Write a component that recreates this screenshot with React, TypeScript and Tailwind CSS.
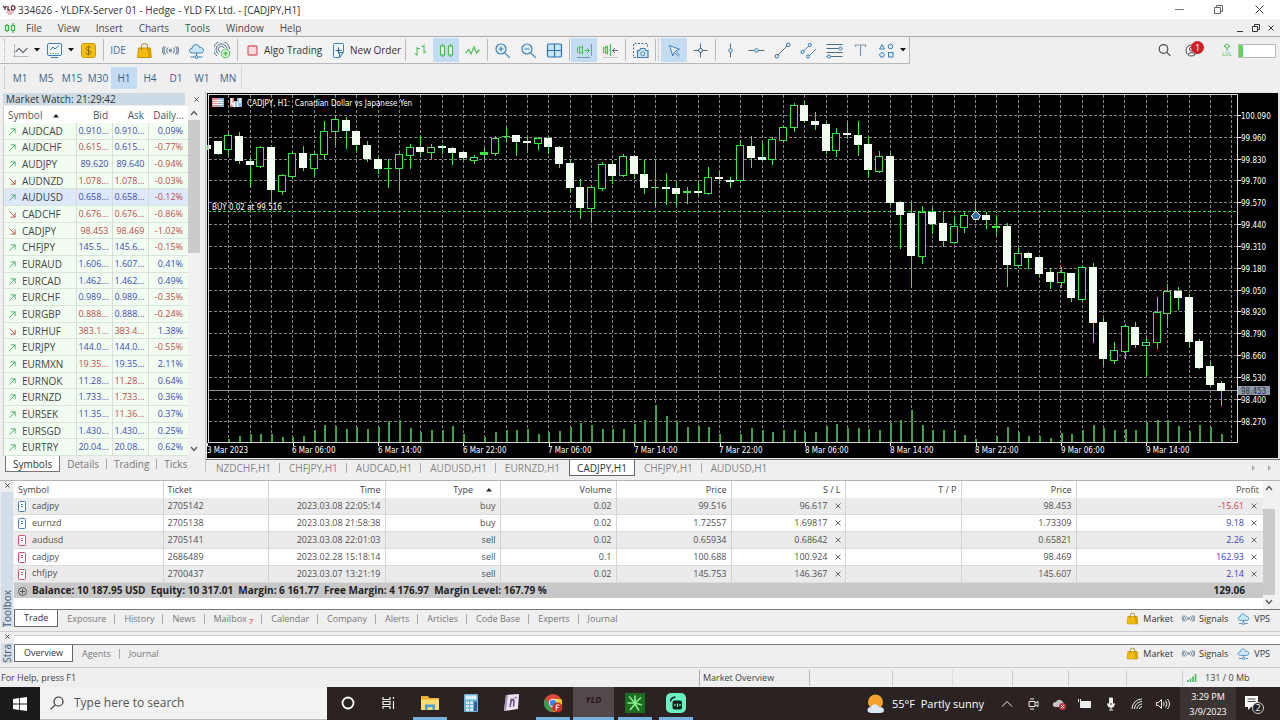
import React from "react";

type IconName =
  | "line" | "template" | "dollar" | "bag" | "signal" | "cloud" | "copy" | "stop" | "order" | "bars" | "candles"
  | "zigzag" | "zoomIn" | "zoomOut" | "tiles" | "scroll" | "shift" | "camera" | "cursor" | "cross" | "vline"
  | "hline" | "trend" | "channel" | "fibo" | "text" | "shapes" | "search";

const B = "#3f7fb5";
const G = "#4cbb55";
const D = "#4d6a87";

const drawings: Record<IconName, React.ReactNode> = {
  line: (
    <g stroke="#8b9097">
      <path d="M2.5 2v13.5M1 14.5h15" stroke="#b4b8bc" />
      <path d="M3.5 10l3.5-3.5 4 4 4.5-4.5" stroke="#6d747c" strokeWidth="1.3" />
    </g>
  ),
  template: (
    <g stroke={B}>
      <rect x="1.5" y="1.5" width="14" height="12" rx="1.5" fill="#f3f9fe" />
      <path d="M4 8l3-3 2 2 4-3.5" />
      <path d="M4 11.5h9" strokeDasharray="1.5 1" stroke={G} />
      <path d="M5 15.5h7" />
    </g>
  ),
  dollar: (
    <g>
      <rect x="1.5" y="1.5" width="14" height="14" rx="2.5" fill="#f4c20d" stroke="#d09a00" />
      <path d="M11 6.2C10.600 5.200 9.700 4.800 8.500 4.800c-1.500 0-2.500.7-2.500 1.800 0 2.600 5 1.200 5 3.800 0 1.200-1.100 1.900-2.500 1.900-1.400 0-2.400-.6-2.700-1.700M8.500 3.500v10" stroke="#8d6600" />
    </g>
  ),
  bag: (
    <g>
      <path d="M2.500 6h12l.8 9.500H1.700z" fill="#f1bd0c" stroke="#c99300" />
      <path d="M5.500 8V4.500a3 3 0 0 1 6 0V8" stroke="#a87b00" />
      <path d="M11.500 6.500h3l.4 8.500h-2.600z" fill="#d99f00" stroke="none" />
    </g>
  ),
  signal: (
    <g stroke={D}>
      <circle cx="8.500" cy="8.500" r="1.200" fill="#8fc0e6" />
      <path d="M6 5.500a4 4 0 0 0 0 6M11 5.500a4 4 0 0 1 0 6M3.500 4.500a6.500 6.500 0 0 0 0 8M13.500 4.500a6.500 6.500 0 0 1 0 8M1.500 4.500a8 8 0 0 0 0 8M15.500 4.500a8 8 0 0 1 0 8" />
    </g>
  ),
  cloud: (
    <g stroke={B}>
      <path d="M4.500 11C.5 11 .5 6.500 4 6.500 4 2 10.500 1 11.500 5.500c5-.5 5 5.500 1.500 5.500z" fill="#c8e6fa" />
      <path d="M8.500 11v3M2.500 15h4.200M10.300 15h4.200" />
      <circle cx="8.500" cy="15" r="1.500" fill="#c8e6fa" />
    </g>
  ),
  copy: (
    <g stroke={D}>
      <path d="M3 14a8 8 0 1 1 12.500-7M4.500 12a5.500 5.500 0 1 1 8.500-5.500M6 10a3 3 0 1 1 4-4" />
      <circle cx="11.500" cy="11.500" r="4.300" fill="#dff7de" stroke={G} />
      <path d="M9.300 11.500h4.400M11.500 9.300v4.400" stroke={G} strokeWidth="1.300" />
    </g>
  ),
  stop: <rect x="4" y="4" width="9" height="9" rx="1" fill="#fbdcdc" stroke="#d2686b" strokeWidth="1.300" />,
  order: (
    <g stroke={B}>
      <path d="M13.500 9V2.500a1 1 0 0 0-1-1h-8a1 1 0 0 0-1 1v12a1 1 0 0 0 1 1h5z" fill="#f2f9fe" />
      <path d="M13.500 10.500l-4 5v-5z" fill="#cfe6f8" />
      <path d="M5.500 8.500h6M8.500 5.500v6" stroke="#2e6496" strokeWidth="1.200" />
    </g>
  ),
  bars: <path d="M5 5v9M5 12H2.500M5 6.500h3M12 2.500v9M12 4.500H9.500M12 10h2.500" stroke={G} />,
  candles: (
    <g stroke={G} strokeWidth="1.200">
      <rect x="2.500" y="4" width="4" height="9" fill="#e6f7e6" />
      <rect x="10.500" y="4" width="4" height="9" fill="#e6f7e6" />
      <path d="M4.500 2v2M4.500 13v2M12.500 2v2M12.500 13v2" />
    </g>
  ),
  zigzag: <path d="M1.500 11l3.500-3.500 2 4.500 3-7 2.500 6 3-3.500" stroke={G} strokeWidth="1.200" />,
  zoomIn: (
    <g stroke={B} strokeWidth="1.200">
      <circle cx="7" cy="7" r="5" fill="#dff0fc" />
      <path d="M10.800 10.800l5 5M4.500 7h5M7 4.500v5" />
    </g>
  ),
  zoomOut: (
    <g stroke={B} strokeWidth="1.200">
      <circle cx="7" cy="7" r="5" fill="#dff0fc" />
      <path d="M10.800 10.800l5 5M4.500 7h5" />
    </g>
  ),
  tiles: (
    <g stroke="#2f70a8" strokeWidth="1.200">
      <rect x="1.500" y="2" width="14" height="13" rx="1.500" fill="#c9e5fa" />
      <path d="M8.500 2v13M1.500 8.500h14" />
    </g>
  ),
  scroll: (
    <g stroke={G}>
      <path d="M1.500 5v6M3.500 4v8M6.500 3.500v9M4.500 5.500h2v5h-2M8.500 8.500h4.500M11 6l2.500 2.500L11 11" />
      <path d="M15.500 2v12M1 15.500h13" stroke="#7795ad" />
    </g>
  ),
  shift: (
    <g stroke={G}>
      <path d="M1.500 5v6M3.500 4v8M5.500 3.500v9M3.500 5.500h2v5h-2M8.500 2v12" strokeWidth="1.200" />
      <path d="M16 8.500h-5M13 6l-2.500 2.500L13 11" stroke={D} />
      <path d="M1 15.500h15" stroke="#c3c7ca" />
    </g>
  ),
  camera: (
    <g stroke={B}>
      <path d="M4 15.500H1.500V1.500h14V5" stroke={D} strokeDasharray="2 1.500" />
      <path d="M5.500 8.500h2l1.200-2h4l1.200 2H16v7H5.500z" fill="#c9e5fa" strokeWidth="1.200" />
      <circle cx="10.700" cy="11.700" r="1.900" fill="#fff" />
    </g>
  ),
  cursor: <path d="M3.500 3.500l10 3.800-4 1.700 4 4-1.200 1.200-4-4-1.500 3.800z" fill="#e4f2fd" stroke={B} />,
  cross: (
    <g stroke={D}>
      <path d="M8.500 1.500v14M1.500 8.500h14" />
      <circle cx="8.500" cy="8.500" r="2" fill="#d8ecfb" />
    </g>
  ),
  vline: (
    <g stroke={D}>
      <path d="M8.500 1.500v14" />
      <circle cx="8.500" cy="8.500" r="1.800" fill="#d8ecfb" stroke={B} />
    </g>
  ),
  hline: (
    <g stroke={D}>
      <path d="M.5 8.500h16" />
      <circle cx="8.500" cy="8.500" r="1.800" fill="#d8ecfb" stroke={B} />
    </g>
  ),
  trend: (
    <g stroke={D}>
      <path d="M3 14L14 3" />
      <circle cx="2.800" cy="14.200" r="1.800" fill="#d8ecfb" />
      <circle cx="14.200" cy="2.800" r="1.800" fill="#d8ecfb" />
    </g>
  ),
  channel: (
    <g stroke={B}>
      <path d="M2.500 10L10 3M7.500 15.500L16 7" />
      <circle cx="2.500" cy="10" r="1.600" fill="#d8ecfb" />
      <circle cx="9.800" cy="3" r="1.600" fill="#d8ecfb" />
      <circle cx="8" cy="14.500" r="1.600" fill="#d8ecfb" />
    </g>
  ),
  fibo: (
    <g stroke={D}>
      <path d="M.5 2.500h16M.5 6.500h16M.5 10.500h16M.5 14.500h16" />
      <circle cx="14.500" cy="6.500" r="1.600" fill="#d8ecfb" stroke={B} />
      <circle cx="3" cy="14.500" r="1.600" fill="#d8ecfb" stroke={B} />
    </g>
  ),
  text: <path d="M3.500 5V3h10v2M8.500 3v11" stroke="#8495a6" strokeWidth="1.200" />,
  shapes: (
    <g stroke={B}>
      <path d="M4 2.500l2.500 4.500h-5z" fill="#d8ecfb" />
      <circle cx="12.500" cy="4.500" r="2.300" fill="#d8ecfb" />
      <path d="M4 10.300l2.500 1.900-1 2.800H2.500l-1-2.800z" fill="#d8ecfb" />
      <rect x="10.500" y="10.500" width="4.500" height="4.500" fill="#d8ecfb" />
    </g>
  ),
  search: (
    <g stroke="#4a4a4a" strokeWidth="1.200">
      <circle cx="7.500" cy="7" r="4.300" />
      <path d="M10.800 10.300l3.500 3.500" />
    </g>
  ),
};

function Icon({ name, className = "size-[17px]" }: { name: IconName; className?: string }) {
  return (
    <svg viewBox="0 0 17 17" fill="none" className={className} aria-hidden="true">
      {drawings[name]}
    </svg>
  );
}

function Cross({ className = "size-[6px]" }: { className?: string }) {
  return (
    <svg viewBox="0 0 6 6" className={className} fill="none" stroke="currentColor" aria-hidden="true">
      <path d="M.5.5l5 5M5.500.5l-5 5" />
    </svg>
  );
}

function Tool({ name, label, active }: { name: IconName; label: string; active?: boolean }) {
  return (
    <button
      type="button"
      aria-label={label}
      aria-pressed={active}
      className={`flex h-6 w-[26px] shrink-0 items-center justify-center ${active ? "bg-[#c3dcf1]" : ""}`}
    >
      <Icon name={name} />
    </button>
  );
}

const Sep = () => <span className="mx-px h-[22px] w-0.5 shrink-0 border-r border-[#b9bcbf]" />;

const Grip = () => <span className="mx-px h-[22px] w-0.5 shrink-0 border-l border-dotted border-[#b0b0b0]" />;

function Drop({ label }: { label: string }) {
  return (
    <button type="button" aria-label={label} className="flex h-6 w-2 shrink-0 items-center justify-center">
      <svg viewBox="0 0 6 4" className="h-1 w-1.5" aria-hidden="true">
        <path d="M0 0h6L3 3.500z" fill="#111" />
      </svg>
    </button>
  );
}

function Header() {
  const menu = ["File", "View", "Insert", "Charts", "Tools", "Window", "Help"];
  return (
    <header>
      <div className="flex h-[19px] items-center bg-white pl-0.5 text-[#333]">
        <svg viewBox="0 0 14 10" className="mr-0.5 h-2.5 w-3.5" aria-hidden="true">
          <path d="M1 1l2 2 1.500-2M3 3v2M6 1v4h2M9.500 1v4q4 0 3.500-2.500T9.500 1" fill="none" stroke="#63343c" strokeWidth="1.300" />
          <path d="M4 7.500l3-.8 2 .8 3-.8M6 9h4" fill="none" stroke="#d5747b" />
        </svg>
        <h1 className="whitespace-nowrap">334626 - YLDFX-Server 01 - Hedge - YLD FX Ltd. - [CADJPY,H1]</h1>
        <div className="ml-auto flex">
          <button type="button" aria-label="Minimize" className="flex w-[39px] justify-center">
            <svg viewBox="0 0 9 9" className="size-[9px]" stroke="#777"><path d="M0 4.500h9" /></svg>
          </button>
          <button type="button" aria-label="Restore" className="flex w-[39px] justify-center">
            <svg viewBox="0 0 9 9" className="size-[9px]" fill="none" stroke="#666"><path d="M.5 2.500h6v6h-6zM2.500 2.500v-2h6v6h-2" /></svg>
          </button>
          <button type="button" aria-label="Close" className="flex w-[42px] justify-center">
            <svg viewBox="0 0 9 9" className="size-[9px]" stroke="#444"><path d="M.5.5l8 8M8.500.5l-8 8" /></svg>
          </button>
        </div>
      </div>
      <nav className="flex h-[18px] items-center border-b border-[#a9abad] text-[#4a4a4a]">
        <svg viewBox="0 0 12 12" className="mx-1 size-3" fill="none" stroke="#3db54a" strokeWidth="1.200" aria-hidden="true">
          <path d="M1.500 3.500h3v5h-3zM7.500 3.500h3v5h-3zM3 2v1.500M3 8.500V10M9 1v2.500M9 8.500V11" />
        </svg>
        {menu.map((m) => (
          <button type="button" key={m} className="pr-[10px] pl-[6px]">
            {m}
          </button>
        ))}
        <div className="ml-auto flex items-center gap-[8px] pr-[6px] text-[#333]">
          <button type="button" aria-label="Minimize chart">
            <svg viewBox="0 0 8 8" className="size-2" stroke="#333"><path d="M1 7.500h6" /></svg>
          </button>
          <button type="button" aria-label="Restore chart">
            <svg viewBox="0 0 8 8" className="size-2" fill="none" stroke="#333"><path d="M.5 2.500h5v5h-5zM2.500 2.500v-2h5v5h-2" /></svg>
          </button>
          <button type="button" aria-label="Close chart"><Cross /></button>
        </div>
      </nav>
      <div className="flex h-[27px] items-center">
        <div className="flex h-[27px] items-center border-r border-b border-[#b5b7b9] bg-[#f2f2f2] pr-0.5 pl-[3px] text-[#333]">
          <Grip />
          <Tool name="line" label="Chart type" />
          <Drop label="Chart types" />
          <Tool name="template" label="Template" />
          <Drop label="Templates" />
          <Tool name="dollar" label="Symbols" />
          <Sep />
          <button type="button" className="w-[26px] text-[#3b6f9e]">IDE</button>
          <Tool name="bag" label="Market" />
          <Tool name="signal" label="Signals" />
          <Tool name="cloud" label="VPS" />
          <Tool name="copy" label="Copy trading" />
          <Sep />
          <button type="button" className="flex w-[85px] items-center gap-[3px] pl-[5px] whitespace-nowrap"><Icon name="stop" />Algo Trading</button>
          <button type="button" className="flex w-[79px] items-center gap-[3px] pl-[6px] whitespace-nowrap"><Icon name="order" />New Order</button>
          <Sep />
          <Tool name="bars" label="Bar chart" />
          <Tool name="candles" label="Candlesticks" active />
          <Tool name="zigzag" label="Line chart" />
          <Sep />
          <Tool name="zoomIn" label="Zoom in" />
          <Tool name="zoomOut" label="Zoom out" />
          <Tool name="tiles" label="Tile windows" />
          <Sep />
          <Tool name="scroll" label="Auto scroll" active />
          <Tool name="shift" label="Chart shift" />
          <Sep />
          <Tool name="camera" label="Screenshot" />
          <Sep />
          <Grip />
          <Tool name="cursor" label="Cursor" active />
          <Tool name="cross" label="Crosshair" />
          <Sep />
          <Tool name="vline" label="Vertical line" />
          <Tool name="hline" label="Horizontal line" />
          <Tool name="trend" label="Trendline" />
          <Tool name="channel" label="Channel" />
          <Tool name="fibo" label="Fibonacci" />
          <Tool name="text" label="Text" />
          <Tool name="shapes" label="Shapes" />
          <Drop label="More shapes" />
        </div>
        <div className="ml-auto flex items-center pr-1">
          <button type="button" aria-label="Search" className="mr-3"><Icon name="search" /></button>
          <button type="button" aria-label="Account" className="relative mr-6 size-[13px]">
            <svg viewBox="0 0 13 13" fill="none" stroke="#444" className="size-[13px]">
              <circle cx="6.500" cy="6.500" r="5.500" /><circle cx="6.500" cy="5" r="2" /><path d="M3 10.500q3.500-4 7 0" />
            </svg>
            <span className="absolute -top-[3px] left-[6px] flex size-[13px] items-center justify-center rounded-full bg-[#cc2227] text-[9px] text-white">1</span>
          </button>
          <div className="mr-1.5 flex flex-col items-center text-[6px] leading-[7px] text-[#48b956]">
            <svg viewBox="0 0 8 8" className="size-2" fill="none" stroke="#48b956"><path d="M4 .8L7 3 4 5.500 1 3zM4 5.500V8" /></svg>
            LVL
          </div>
          <div className="h-3.5 w-[38px] border border-[#b9b9b9] bg-white"><div className="h-3 w-1 bg-[#5ad75e]" /></div>
        </div>
      </div>
      <div className="flex h-[28px] items-center pl-[3px] text-[#3c6388]">
        <Grip />
        {["M1", "M5", "M15", "M30", "H1", "H4", "D1", "W1", "MN"].map((t) => (
          <button
            type="button"
            key={t}
            className={`flex h-[22px] w-[26px] items-center justify-center ${t === "H1" ? "bg-[#c3dcf1]" : ""}`}
          >
            {t}
          </button>
        ))}
        <span className="h-[22px] border-r border-[#d2d4d6]" />
      </div>
    </header>
  );
}

type Quote = [dir: "u" | "d", symbol: string, bid: string, ask: string, daily: string, colors: string];

/* The last field holds bid and ask colours: b = blue, r = red. */
const quotes: Quote[] = [
  ["u", "AUDCAD", "0.910...", "0.910...", "0.09%", "bb"],
  ["u", "AUDCHF", "0.615...", "0.615...", "-0.77%", "rb"],
  ["u", "AUDJPY", "89.620", "89.640", "-0.94%", "bb"],
  ["d", "AUDNZD", "1.078...", "1.078...", "-0.03%", "rr"],
  ["u", "AUDUSD", "0.658...", "0.658...", "-0.12%", "bb"],
  ["d", "CADCHF", "0.676...", "0.676...", "-0.86%", "rr"],
  ["d", "CADJPY", "98.453", "98.469", "-1.02%", "rr"],
  ["u", "CHFJPY", "145.5...", "145.6...", "-0.15%", "bb"],
  ["u", "EURAUD", "1.606...", "1.607...", "0.41%", "bb"],
  ["u", "EURCAD", "1.462...", "1.462...", "0.49%", "bb"],
  ["u", "EURCHF", "0.989...", "0.989...", "-0.35%", "bb"],
  ["u", "EURGBP", "0.888...", "0.888...", "-0.24%", "rb"],
  ["d", "EURHUF", "383.1...", "383.4...", "1.38%", "rr"],
  ["u", "EURJPY", "144.0...", "144.0...", "-0.55%", "bb"],
  ["u", "EURMXN", "19.35...", "19.35...", "2.11%", "rb"],
  ["u", "EURNOK", "11.28...", "11.28...", "0.64%", "br"],
  ["u", "EURNZD", "1.733...", "1.733...", "0.36%", "br"],
  ["u", "EURSEK", "11.35...", "11.36...", "0.37%", "br"],
  ["u", "EURSGD", "1.430...", "1.430...", "0.25%", "bb"],
  ["u", "EURTRY", "20.04...", "20.08...", "0.62%", "bb"],
];

const blue = "text-[#3f4ab8]";
const red = "text-[#c04c4c]";

function Chevron({ down }: { down?: boolean }) {
  return (
    <svg viewBox="0 0 8 6" className="h-1.5 w-2" fill="none" stroke="#555" strokeWidth="1.200" aria-hidden="true">
      <path d={down ? "M1 1l3 3.500L7 1" : "M1 5l3-3.500L7 5"} />
    </svg>
  );
}

const Up = () => (
  <svg viewBox="0 0 6 4" className="inline h-1 w-1.5" aria-hidden="true"><path d="M0 3.500h6L3 0z" fill="#222" /></svg>
);

function MarketWatch() {
  return (
    <aside className="flex w-[206px] shrink-0 flex-col border-r border-[#c4c4c4] pl-[3px]">
      <div className="flex h-[14px] items-center justify-between pr-[5px]">
        <h2 className="flex-1 bg-[#ccdae6] pl-[3px] leading-3 text-[#333]">Market Watch: 21:29:42</h2>
        <button type="button" aria-label="Close Market Watch" className="ml-2 p-px text-[#333]"><Cross className="size-[5px]" /></button>
      </div>
      <div className="mr-[5px] flex h-[350px] border-l border-[#ccc] bg-white">
        <table className="h-[350px] flex-1 table-fixed border-collapse leading-[12px]">
          <colgroup><col /><col className="w-[36px]" /><col className="w-[36px]" /><col className="w-[40px]" /></colgroup>
          <thead>
            <tr className="h-[17px] text-[#555]">
              <th className="pl-1 text-left font-normal">Symbol <span className="ml-2"><Up /></span></th>
              <th className="pr-1 text-right font-normal">Bid</th>
              <th className="pr-1 text-right font-normal">Ask</th>
              <th className="pr-1 text-right font-normal">Daily...</th>
            </tr>
          </thead>
          <tbody>
            {quotes.map(([dir, symbol, bid, ask, daily, c]) => (
              <tr key={symbol} className={`border-b border-[#d8e5d8] ${symbol === "AUDUSD" ? "bg-[#dde9fa]" : "bg-[#f1fdf0]"}`}>
                <td className="border-r border-[#d5dfd5] pl-[5px] text-[#444]">
                  <svg viewBox="0 0 8 8" className="mr-1.5 inline size-[7px] align-baseline" fill="none" stroke={dir === "u" ? "#3aa564" : "#c04040"}>
                    <path d={dir === "u" ? "M.5 7.500l6.500-6.500M2 1h5v5" : "M.5.5l6.500 6.500M2 7h5V2"} />
                  </svg>
                  {symbol}
                </td>
                <td className={`border-r border-[#d5dfd5] pr-[3px] text-right text-[9px] ${c[0] === "b" ? blue : red}`}>{bid}</td>
                <td className={`border-r border-[#d5dfd5] pr-[3px] text-right text-[9px] ${c[1] === "b" ? blue : red}`}>{ask}</td>
                <td className={`pr-[5px] text-right text-[9px] ${daily.startsWith("-") ? red : blue}`}>{daily}</td>
              </tr>
            ))}
          </tbody>
        </table>
        <div className="flex w-3 flex-col items-center justify-between bg-[#f1f1f1] pt-1 pb-1">
          <Chevron />
          <div className="mt-1 h-[133px] w-3 bg-[#cbcbcb]" />
          <div className="flex-1" />
          <Chevron down />
        </div>
      </div>
      <div className="flex h-[16px] text-[#777]">
        <button type="button" className="ml-0.5 border border-t-0 border-[#777] bg-white px-[7px] text-[#333]">Symbols</button>
        {["Details", "Trading", "Ticks"].map((t, i) => (
          <button type="button" key={t} className="flex items-center pl-[7px]">
            {t}
            {i < 2 && <span className="ml-[7px] h-2.5 border-r border-[#aaa]" />}
          </button>
        ))}
      </div>
    </aside>
  );
}

/* Candles on the hourly grid: [kind, high, bodyTop, bodyBottom, low]; w = filled, h = hollow, g = flat. */
const candles: [string, number, number, number, number][] = [
  ["w", 145, 145, 149, 149], ["w", 141, 141, 154, 154], ["h", 133, 135, 149, 154], ["w", 132, 136, 161, 163],
  ["w", 158, 161, 165, 187], ["h", 146, 147, 166, 167], ["w", 147, 147, 190, 201], ["h", 174, 175, 191, 194],
  ["h", 152, 153, 176, 178], ["w", 146, 153, 168, 170], ["h", 153, 154, 168, 176], ["h", 121, 131, 154, 158],
  ["h", 115, 119, 131, 144], ["w", 117, 120, 131, 148], ["w", 130, 131, 145, 150], ["w", 141, 145, 159, 161],
  ["w", 157, 159, 169, 173], ["g", 159, 168, 169, 187], ["h", 153, 154, 168, 190], ["h", 144, 147, 155, 168],
  ["w", 135, 147, 152, 155], ["h", 144, 147, 152, 158], ["w", 145, 146, 148, 153], ["w", 147, 148, 153, 164],
  ["w", 152, 152, 158, 159], ["h", 155, 157, 160, 163], ["g", 148, 152, 155, 158], ["h", 136, 138, 153, 155],
  ["g", 127, 136, 137, 141], ["w", 135, 135, 142, 155], ["w", 136, 141, 143, 152], ["h", 137, 138, 143, 149],
  ["w", 136, 138, 147, 153], ["w", 146, 147, 164, 167], ["w", 159, 163, 188, 192], ["w", 179, 187, 208, 218],
  ["h", 186, 187, 208, 222], ["h", 162, 164, 188, 190], ["w", 161, 164, 176, 183], ["h", 154, 156, 175, 176],
  ["w", 155, 156, 174, 178], ["w", 160, 174, 188, 193], ["g", 159, 187, 188, 205], ["w", 173, 187, 189, 204],
  ["w", 182, 188, 194, 204], ["g", 187, 191, 193, 203], ["w", 182, 191, 193, 194], ["h", 167, 177, 193, 194],
  ["w", 170, 177, 179, 183], ["w", 177, 180, 182, 187], ["h", 140, 145, 180, 181], ["w", 136, 146, 158, 167],
  ["w", 142, 157, 160, 160], ["h", 137, 139, 159, 164], ["h", 125, 127, 140, 142], ["h", 103, 105, 127, 131],
  ["w", 101, 105, 121, 122], ["w", 112, 121, 125, 129], ["w", 122, 124, 151, 153], ["h", 128, 133, 150, 156],
  ["w", 122, 133, 135, 138], ["w", 121, 135, 145, 155], ["w", 137, 144, 170, 177], ["h", 151, 156, 171, 172],
  ["w", 153, 156, 203, 204], ["w", 201, 202, 215, 248], ["w", 202, 213, 256, 287], ["h", 206, 212, 256, 263],
  ["w", 208, 212, 224, 233], ["w", 212, 223, 241, 246], ["h", 218, 226, 242, 243], ["h", 211, 215, 227, 232],
  ["g", 200, 216, 217, 218], ["w", 212, 215, 220, 228], ["g", 215, 226, 228, 234], ["w", 223, 226, 265, 286],
  ["h", 248, 253, 265, 267], ["w", 252, 253, 258, 268], ["w", 257, 257, 274, 276], ["w", 268, 272, 282, 288],
  ["h", 267, 272, 282, 287], ["w", 273, 273, 298, 301], ["h", 266, 267, 299, 300], ["w", 263, 267, 323, 342],
  ["w", 318, 322, 359, 365], ["h", 342, 350, 360, 363], ["h", 324, 326, 351, 358], ["w", 322, 327, 345, 347],
  ["h", 338, 342, 345, 375], ["h", 297, 312, 342, 348], ["h", 284, 291, 313, 327], ["w", 287, 291, 298, 309],
  ["w", 294, 297, 342, 347], ["w", 339, 341, 368, 368], ["w", 362, 366, 385, 385], ["w", 381, 383, 391, 405],
];

const volumes = [
  0, 0, 3, 6, 8, 8, 8, 5, 5, 6, 12, 17, 16, 13, 15, 13, 15, 21, 22, 14, 10, 12, 12, 16, 8, 0, 5, 10, 12, 12, 13, 8, 10, 11,
  15, 19, 17, 13, 13, 13, 18, 22, 37, 26, 21, 15, 16, 15, 8, 0, 8, 14, 12, 10, 12, 12, 10, 10, 16, 18, 14, 14, 13, 12, 19,
  22, 32, 17, 12, 12, 12, 7, 3, 0, 6, 15, 10, 6, 6, 4, 9, 8, 12, 17, 14, 12, 13, 12, 20, 22, 22, 16, 11, 17, 15, 8,
];

const prices = [
  "100.090", "99.960", "99.830", "99.700", "99.570", "99.440", "99.310", "99.180", "99.050", "98.920", "98.790", "98.660",
  "98.530", "98.400", "98.270",
];

const dates = [
  "3 Mar 2023", "6 Mar 06:00", "6 Mar 14:00", "6 Mar 22:00", "7 Mar 06:00", "7 Mar 14:00", "7 Mar 22:00", "8 Mar 06:00",
  "8 Mar 14:00", "8 Mar 22:00", "9 Mar 06:00", "9 Mar 14:00",
];

function Chart() {
  const cx = (i: number) => Math.round(206.9 + 10.67 * i);
  return (
    <svg viewBox="206 92 1074 367" className="block w-full" role="img" aria-label="CADJPY hourly candlestick chart">
      <rect x="206" y="92" width="1074" height="367" fill="#e4e6e4" />
      <rect x="207" y="93" width="1071" height="365" fill="#000" />
      <g stroke="#858585" strokeDasharray="3 2" shapeRendering="crispEdges">
        {Array.from({ length: 48 }, (_, i) => {
          const x = Math.round(228.2 + i * 21.34) + 0.5;
          return <line key={i} x1={x} x2={x} y1="95" y2="441" />;
        })}
        {prices.map((p, i) => {
          const y = Math.round(115 + i * 21.83) + 0.5;
          return <line key={p} x1="209" x2="1237" y1={y} y2={y} />;
        })}
      </g>
      <line x1="208" x2="1237" y1="211.5" y2="211.5" stroke="#000" shapeRendering="crispEdges" />
      <line x1="208" x2="1237" y1="211.5" y2="211.5" stroke="#2fd63c" strokeDasharray="3 2" shapeRendering="crispEdges" />
      <line x1="208" x2="1237" y1="390.5" y2="390.5" stroke="#8c94a0" shapeRendering="crispEdges" />
      <g shapeRendering="crispEdges">
        {volumes.map((v, i) => v > 0 && <rect key={i} x={cx(i)} y={442 - v} width="2" height={v} fill="#3fa344" />)}
        {candles.map(([kind, high, top, bottom, low], i) => {
          const x = cx(i);
          const left = Math.max(x - 4, 208);
          return (
            <g key={i}>
              <rect x={x} y={high} width="1" height={low - high + 1} fill="#3ee646" />
              {kind === "h" ? (
                <rect x={x - 3.5} y={top + 0.5} width="7" height={bottom - top} fill="#000" stroke="#3ee646" />
              ) : (
                <rect x={left} y={top} width={x + 4 - left} height={bottom - top} fill={kind === "w" ? "#f2fff0" : "#3ee646"} />
              )}
            </g>
          );
        })}
      </g>
      <path d="M976 211l4.500 4.500-2 4h-5l-2-4z" fill="#3d6f9f" stroke="#e6f0fa" />
      <path d="M208.500 442V94.500h1029V442.500H208" fill="none" stroke="#d9d9d9" shapeRendering="crispEdges" />
      <g>
        <rect x="212" y="98" width="12" height="9" fill="#fff" />
        <path d="M212 98h6v9h-6z" fill="#e68b8e" />
        <path d="M218 98h6v9h-6z" fill="#86b4da" />
        <path d="M213 100.500h10M213 102.500h10M213 104.500h10" stroke="#fff" />
        <path d="M230 98h5v9h-5z" fill="#e39598" />
        <path d="M235 98h7v9h-7z" fill="#8dbbe2" />
        <path d="M231.500 98v5l2.500 3v-4M237.500 102v5M240 98v5" fill="none" stroke="#fff" strokeWidth="1.500" />
        <path d="M234 97h3v4h-3z" fill="#000" />
      </g>
      <g fill="#fff" fontSize="8" fontFamily="'DejaVu Sans Condensed', 'DejaVu Sans', sans-serif">
        <text x="247" y="106" xmlSpace="preserve">CADJPY, H1:  Canadian Dollar vs Japanese Yen</text>
        <text x="212" y="210">BUY 0.02 at 99.516</text>
        {prices.map((p, i) => {
          const y = Math.round(115 + i * 21.83);
          return (
            <g key={p}>
              <rect x="1238" y={y} width="3" height="1" />
              <text x="1241" y={y + 4}>{p}</text>
            </g>
          );
        })}
        {dates.map((d, i) => (
          <g key={d}>
            <rect x={Math.round(207.4 + 85.36 * i)} y="443" width="1" height="3" />
            <text x={Math.round(207 + 85.36 * i)} y="453">{d}</text>
          </g>
        ))}
        <rect x="1238" y="386" width="32" height="9" fill="#8f98a8" />
        <text x="1241" y="394" fill="#2c3440">98.453</text>
      </g>
    </svg>
  );
}

function ChartTabs() {
  const tabs = ["NZDCHF,H1", "CHFJPY,H1", "AUDCAD,H1", "AUDUSD,H1", "EURNZD,H1", "CADJPY,H1", "CHFJPY,H1", "AUDUSD,H1"];
  return (
    <div className="flex h-[17px] items-stretch border-t border-[#777] pl-px text-[#858585]">
      {tabs.map((t, i) =>
        i === 5 ? (
          <button type="button" key={i} className="border border-t-0 border-[#666] bg-white px-[7px] text-[#333]">{t}</button>
        ) : (
          <button type="button" key={i} className="flex items-center pl-[9px]">
            {t}
            <span className={`ml-[8px] h-2.5 border-r ${i === 4 || i === 7 ? "border-transparent" : "border-[#aaa]"}`} />
          </button>
        ),
      )}
      <div className="ml-auto flex items-center gap-3 pr-2">
        {[0, 1].map((i) => (
          <svg key={i} viewBox="0 0 4 6" className="h-1.5 w-1"><path d="M0 0l3 3-3 3z" fill="#aaa" /></svg>
        ))}
      </div>
    </div>
  );
}

const trades = [
  ["cadjpy", "2705142", "2023.03.08 22:05:14", "buy", "0.02", "99.516", "96.617", "98.453", "-15.61"],
  ["eurnzd", "2705138", "2023.03.08 21:58:38", "buy", "0.02", "1.72557", "1.69817", "1.73309", "9.18"],
  ["audusd", "2705141", "2023.03.08 22:01:03", "sell", "0.02", "0.65934", "0.68642", "0.65821", "2.26"],
  ["cadjpy", "2686489", "2023.02.28 15:18:14", "sell", "0.1", "100.688", "100.924", "98.469", "162.93"],
  ["chfjpy", "2700437", "2023.03.07 13:21:19", "sell", "0.02", "145.753", "146.367", "145.607", "2.14"],
];

function Side({ label, name }: { label: string; name: string }) {
  return (
    <div className="flex w-[14px] shrink-0 flex-col items-center bg-[#eee] pt-[2px]">
      <button type="button" aria-label={`Close ${name}`} className="mb-1 text-[#333]"><Cross className="size-[5px]" /></button>
      <div className="mb-1 flex min-h-0 w-3 flex-1 items-center overflow-hidden bg-[#d3deeb]">
        <span className="mt-auto block rotate-180 text-[10px] leading-3 text-[#49596b] [writing-mode:vertical-rl]">{label}</span>
      </div>
    </div>
  );
}

function Services() {
  const items: [IconName, string][] = [["bag", "Market"], ["signal", "Signals"], ["cloud", "VPS"]];
  return (
    <div className="ml-auto flex items-center gap-[9px] pr-[9px] text-[#333]">
      {items.map(([icon, t]) => (
        <a href="#services" key={t} className="flex items-center gap-1"><Icon name={icon} className="size-[13px]" />{t}</a>
      ))}
    </div>
  );
}

function Tabs({ tabs }: { tabs: string[] }) {
  return (
    <div className="flex h-[18px] border-t border-[#777] pr-px text-[#777]">
      {tabs.map((t, i) =>
        i === 0 ? (
          <button type="button" key={t} className="border border-t-0 border-[#666] bg-white px-[9px] text-[#333]">{t}</button>
        ) : (
          <button type="button" key={t} className="flex items-center pl-[9px]">
            {t}
            {t === "Mailbox" && <sub className="ml-0.5 text-[8px] text-[#d23c4e]">7</sub>}
            <span className={`ml-2 h-2.5 border-r ${i === tabs.length - 1 ? "border-transparent" : "border-[#aaa]"}`} />
          </button>
        ),
      )}
      <Services />
    </div>
  );
}

function Toolbox() {
  const cell = "border-r border-[#d4d4d4] pr-1 text-right font-normal";
  return (
    <section className="flex h-[151px] border-t border-[#b4b4b4] text-[9px]">
      <Side label="Toolbox" name="Toolbox" />
      <div className="min-w-0 flex-1">
        <div className="flex h-[128px] bg-white">
          <div className="flex-1">
            <table className="h-[117px] w-full table-fixed border-collapse leading-[12px] text-[#505050]">
              <colgroup>
                <col className="w-[149px]" /><col className="w-[105px]" /><col className="w-[117px]" /><col className="w-[115px]" />
                <col className="w-[116px]" /><col className="w-[115px]" /><col className="w-[114px]" /><col className="w-[116px]" />
                <col className="w-[115px]" /><col />
              </colgroup>
              <thead>
                <tr className="h-[17px] text-[#444]">
                  <th className={`${cell} pl-1 !text-left`}>Symbol</th>
                  <th className={`${cell} pl-1 !text-left`}>Ticket</th>
                  <th className={cell}>Time</th>
                  <th className={cell}>Type <span className="mr-1 ml-2.5"><Up /></span></th>
                  <th className={cell}>Volume</th>
                  <th className={cell}>Price</th>
                  <th className={cell}>S / L</th>
                  <th className={cell}>T / P</th>
                  <th className={cell}>Price</th>
                  <th className="pr-1 text-right font-normal">Profit</th>
                </tr>
              </thead>
              <tbody>
                {trades.map(([sym, ticket, time, type, vol, open, sl, price, profit], i) => (
                  <tr key={ticket} className={`border-b border-[#dcdcdc] ${i % 2 ? "bg-white" : "bg-[#ebebeb]"}`}>
                    <td className={`${cell} pl-1 !text-left`}>
                      <svg viewBox="0 0 8 11" className="mr-1.5 inline h-[11px] w-2" fill="#fff" stroke={type === "buy" ? "#4a7fb5" : "#cf5270"}>
                        <rect x=".5" y=".5" width="7" height="10" rx="1" />
                        <path d="M3 3.500h2M3 5.500h2" />
                      </svg>
                      {sym}
                    </td>
                    <td className={`${cell} pl-1 !text-left`}>{ticket}</td>
                    <td className={cell}>{time}</td>
                    <td className={cell}>{type}</td>
                    <td className={cell}>{vol}</td>
                    <td className={cell}>{open}</td>
                    <td className={cell}>
                      {sl}
                      <button type="button" aria-label="Remove stop loss" className="ml-[7px] text-[#666]"><Cross className="inline size-[6px]" /></button>
                    </td>
                    <td className={cell} />
                    <td className={cell}>{price}</td>
                    <td className={`pr-[6px] text-right ${profit.startsWith("-") ? "text-[#d24050]" : "text-[#4040c0]"}`}>
                      {profit}
                      <button type="button" aria-label="Close position" className="ml-[7px] text-[#666]"><Cross className="inline size-[6px]" /></button>
                    </td>
                  </tr>
                ))}
              </tbody>
              <tfoot>
                <tr className="h-4 bg-[#c8c8c8] text-[10px] font-bold text-[#222]">
                  <td colSpan={9} className="pl-1 whitespace-pre">
                    <svg viewBox="0 0 9 9" className="mr-[5px] inline size-[9px]" fill="none" stroke="#555">
                      <circle cx="4.500" cy="4.500" r="4" /><path d="M2 4.500h5M4.500 2v5" />
                    </svg>
                    {"Balance: 10 187.95 USD  Equity: 10 317.01  Margin: 6 161.77  Free Margin: 4 176.97  Margin Level: 167.79 %"}
                  </td>
                  <td className="pr-[18px] text-right">129.06</td>
                </tr>
              </tfoot>
            </table>
          </div>
          <div className="flex w-3 flex-col items-center bg-[#f1f1f1] pt-1 pb-1">
            <Chevron />
            <div className="mt-[18px] h-[86px] w-3 bg-[#cbcbcb]" />
            <div className="flex-1" />
            <Chevron down />
          </div>
          <div className="w-[5px] bg-[#f1f1f1]" />
        </div>
        <Tabs tabs={["Trade", "Exposure", "History", "News", "Mailbox", "Calendar", "Company", "Alerts", "Articles", "Code Base", "Experts", "Journal"]} />
      </div>
    </section>
  );
}

function Strategy() {
  return (
    <section className="flex h-[36px] border-t border-[#ccc] text-[9px]">
      <Side label="Stra" name="Strategy Tester" />
      <div className="min-w-0 flex-1">
        <div className="mt-[3px] h-[9px] border-t border-[#ccc] bg-white" />
        <Tabs tabs={["Overview", "Agents", "Journal"]} />
      </div>
    </section>
  );
}

function StatusBar() {
  return (
    <footer className="flex h-[20px] items-center border-t border-[#ccc] text-[9px] text-[#444]">
      <span className="flex-1 pl-px">For Help, press F1</span>
      <span className="flex h-4 w-[110px] items-center border-l border-[#aaa] pl-[3px]">Market Overview</span>
      <span className="h-4 w-[83px] border-l border-[#bbb]" />
      <span className="h-4 w-[60px] border-l border-[#ccc]" />
      <span className="h-4 w-[60px] border-l border-[#ddd]" />
      <span className="h-4 w-[56px] border-l border-[#ccc]" />
      <span className="h-4 w-[58px] border-l border-[#ccc]" />
      <span className="h-4 w-[56px] border-l border-[#ccc]" />
      <span className="flex h-4 w-[98px] items-center gap-2 border-l border-[#ccc] pl-1">
        <svg viewBox="0 0 10 8" className="h-2 w-2.5"><path d="M1 8V6M3.500 8V4.500M6 8V2.500M8.500 8V0" stroke="#4cb85a" strokeWidth="1.600" /></svg>
        131 / 0 Mb
      </span>
    </footer>
  );
}

const apps: { name: string; open?: boolean; active?: boolean; art: React.ReactNode }[] = [
  { name: "Cortana", art: <circle cx="10" cy="10" r="5.500" fill="none" stroke="#fff" strokeWidth="1.800" /> },
  {
    name: "Task View",
    art: <path d="M4 4v2.500h7V4M4 16v-2.500h7V16M4 8.500h7v3H4zM14.500 4v2M14.500 8v8" fill="none" stroke="#eee" strokeWidth="1.200" />,
  },
  {
    name: "File Explorer",
    open: true,
    art: (
      <g>
        <path d="M1 3h7l1.500 2H19v11H1z" fill="#e7b13c" /><path d="M1 6.500h18V17H1z" fill="#fbdc74" />
        <path d="M5 17v-5.500h10V17h-2.500v-3h-5v3z" fill="#4a9bd8" />
      </g>
    ),
  },
  {
    name: "Calculator",
    art: (
      <g>
        <rect x="3" y="1" width="14" height="18" rx="1" fill="#6fb1d8" /><rect x="4.500" y="2.500" width="11" height="4" fill="#d9f0fb" />
        <path d="M5 8.500h3v2.500H5zM5 12h3v2.500H5zM5 15.500h3V18H5zM9 8.500h3v2.500H9zM9 12h3v2.500H9zM9 15.500h3V18H9z" fill="#dceaf5" />
        <path d="M13 8.500h3V18h-3z" fill="#2d5f99" />
      </g>
    ),
  },
  {
    name: "Journal",
    art: (
      <g>
        <path d="M4 2l13-1-1 15-14 2z" fill="#ece4f2" /><path d="M4 2l2 0-2 16-2 0z" fill="#a893bb" />
        <path d="M8 14l1.500-8.500M9 9q2.500-5 3-1l-.5 5.500M13 5l1.500-1" fill="none" stroke="#6b4a86" strokeWidth="1.500" />
      </g>
    ),
  },
  {
    name: "Chrome",
    open: true,
    art: (
      <g>
        <circle cx="10" cy="10" r="9" fill="#e1473a" /><path d="M2.200 5.500L7 13.500 10 19A9 9 0 0 1 2.200 5.500z" fill="#2fa14f" />
        <path d="M10 6h8.200A9 9 0 0 1 10 19l4-6.500z" fill="#f9c722" />
        <circle cx="10" cy="10" r="4.200" fill="#fff" /><circle cx="10" cy="10" r="3.300" fill="#3f84ec" />
        <circle cx="14.500" cy="14.500" r="5" fill="#c43427" /><path d="M13.200 17.500v-5.500h3.300M13.200 14.500h2.500" fill="none" stroke="#fff" />
      </g>
    ),
  },
  { name: "YLD", open: true, active: true, art: null },
  {
    name: "Green Leaf",
    open: true,
    art: (
      <g>
        <rect width="20" height="20" fill="#1d6c22" />
        <path d="M10 10L4 3.500M10 10V2.500M10 10l6-5.500M10 10H2.500M10 10l7 2M10 11l-5 6M10 11l4 6.500" stroke="#8cf08a" strokeWidth="1.600" />
      </g>
    ),
  },
  {
    name: "Recorder",
    open: true,
    art: (
      <g>
        <rect width="20" height="20" rx="5" fill="#6df0bf" />
        <path d="M4.500 8.500q.5-4 5-4.500" fill="none" stroke="#123" strokeWidth="1.500" />
        <rect x="6.500" y="7.500" width="9.500" height="9" rx="2" fill="#12211d" />
        <path d="M9 13v-2M11.500 14v-3.500M14 13v-2" stroke="#6df0bf" strokeWidth="1.200" />
      </g>
    ),
  },
];

const tray: [string, React.ReactNode][] = [
  ["Show hidden icons", <path key="a" d="M3 10.500l5-5 5 5" />],
  ["Meet now", <path key="b" d="M4 5.500h6v5H4zM10 7l3-1.500v5L10 9M5 3h4M5 13h4" />],
  ["Backup", (
    <g key="c" stroke="none">
      <path d="M2 10q-1-4 3-4 2-4 6-1 3 2 1 6H4z" fill="#c4c4c4" /><circle cx="11.500" cy="10.500" r="3.500" fill="#c93644" />
      <path d="M10 9l3 3M13 9l-3 3" stroke="#fff" />
    </g>
  )],
  ["Battery", <path key="d" d="M3.500 5.500h10v6h-10zM1.500 3v3M3.500 3v3M5 8h7v1.500H5z" fill="#eee" />],
  ["Microphone", <path key="e" d="M6.500 2h3v7h-3zM4.500 7.500q0 4 3.500 4t3.500-4M8 12v2M6 14h4" fill="#eee" />],
  ["Network", <path key="f" d="M3 13A10 10 0 0 1 13 3M5.500 13A7.500 7.500 0 0 1 13 5.500M8 13a5 5 0 0 1 5-5M10.500 13a2.500 2.500 0 0 1 2.500-2.500" />],
  ["Volume", <path key="g" d="M1.500 6.500h2l3-3v9l-3-3h-2zM8.500 6q1.500 2 0 4M10.500 4.500q3 3.500 0 7M12.500 3q4 5 0 10" />],
];

function Taskbar() {
  return (
    <div className="flex h-[33px] items-stretch bg-[#2a2321] text-white">
      <button type="button" aria-label="Start" className="flex w-10 items-center justify-center bg-[#1b1b1b]">
        <svg viewBox="0 0 14 14" className="size-3.5" fill="#fff"><path d="M0 2l6-.9v5.500H0zM6.800 1L14 0v6.600H6.800zM0 7.400h6v5.500L0 12zM6.800 7.400H14V14l-7.200-1z" /></svg>
      </button>
      <label className="flex w-[287px] items-center border-b border-[#bbb] bg-[#f2f2f2] pl-2.5">
        <svg viewBox="0 0 14 14" className="mr-2.5 size-[14px] shrink-0" fill="none" stroke="#333" strokeWidth="1.200" aria-hidden="true">
          <circle cx="8.500" cy="5.500" r="4.500" /><path d="M5.200 8.800L.8 13.200" />
        </svg>
        <input aria-label="Search" placeholder="Type here to search" className="w-full bg-transparent text-[12px] outline-none placeholder:text-[#555]" />
      </label>
      {apps.map((a) => (
        <button
          type="button"
          key={a.name}
          aria-label={a.name}
          className={`flex w-[41px] flex-col items-center justify-end ${a.active ? "bg-[#54494a]" : ""}`}
        >
          {a.art ? (
            <svg viewBox="0 0 20 20" className="mb-1 size-5">{a.art}</svg>
          ) : (
            <span className="mb-2.5 text-[9px] font-bold text-[#2b0f1f] italic">YLD</span>
          )}
          <span className={`h-[3px] ${a.active ? "w-full" : "w-[34px]"} ${a.open ? "bg-[#76b0dd]" : ""}`} />
        </button>
      ))}
      <div className="ml-auto flex items-center">
        <svg viewBox="0 0 20 20" className="mr-1.5 size-[20px]">
          <circle cx="9.500" cy="8" r="7.500" fill="#f3a32c" />
          <path d="M5 19q-4-.5-3.500-3.500Q2 13 5 13q1.500-3.500 5-2.500 2.500.5 3 2.500 5 0 5 3 0 3-4 3z" fill="#dde8f6" />
        </svg>
        <span className="mr-2.5 text-[11px] whitespace-pre">55°F  Partly sunny</span>
        {tray.map(([name, art]) => (
          <button type="button" key={name} aria-label={name} className="flex w-[26px] justify-center">
            <svg viewBox="0 0 16 16" className="size-4" fill="none" stroke="#eee">{art}</svg>
          </button>
        ))}
        <div className="ml-1 flex h-[33px] w-[56px] flex-col items-center justify-center bg-[#3b3432] text-[9px] leading-[15px]">
          <span>3:29 PM</span>
          <span>3/9/2023</span>
        </div>
        <button type="button" aria-label="Notifications" className="relative mr-[18px] ml-[8px] size-[18px]">
          <svg viewBox="0 0 18 18" className="size-[18px]">
            <path d="M1 1h13v11H7l-3 3v-3H1z" fill="#fff" /><path d="M3.500 4h8M3.500 6.500h8" stroke="#444" />
          </svg>
          <span className="absolute top-[7px] left-[8px] flex size-3 items-center justify-center rounded-full border border-[#ccc] bg-[#222] text-[9px]">2</span>
        </button>
      </div>
    </div>
  );
}

export default function App() {
  return (
    <div className="flex min-h-screen flex-col bg-[#efefef] font-['Open_Sans','Noto_Sans',sans-serif] text-[10px] leading-[14px]">
      <Header />
      <main className="flex flex-1 items-start">
        <MarketWatch />
        <div className="min-w-0 flex-1">
          <Chart />
          <ChartTabs />
        </div>
      </main>
      <Toolbox />
      <Strategy />
      <StatusBar />
      <Taskbar />
    </div>
  );
}
